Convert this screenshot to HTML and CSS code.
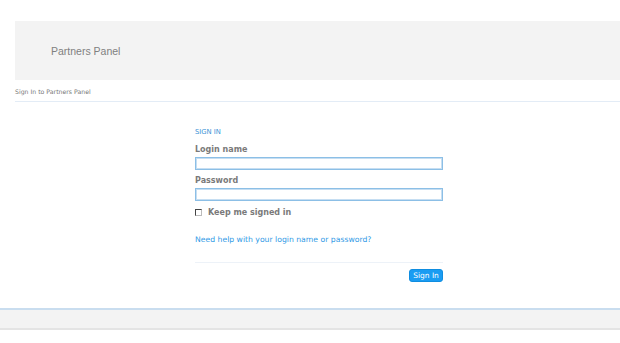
FILE: index.html
```html
<!DOCTYPE html>
<html>
<head>
<meta charset="utf-8">
<link rel="stylesheet" href="styles.css">
</head>
<body>
<div class="page">
  <header class="header">
    <div class="brand">Partners Panel</div>
  </header>
  <div class="crumbs">Sign In to Partners Panel</div>
  <main class="main">
    <form class="login">
      <div class="title">SIGN IN</div>
      <label class="lbl">Login name</label>
      <input class="field" type="text">
      <label class="lbl">Password</label>
      <input class="field" type="password">
      <label class="keep"><span class="box"></span>Keep me signed in</label>
      <a class="help" href="#">Need help with your login name or password?</a>
      <div class="actions">
        <button class="btn" type="button">Sign In</button>
      </div>
    </form>
  </main>
  <footer class="footer"></footer>
</div>
</body>
</html>
```
FILE: styles.css
```css
html, body { margin: 0; padding: 0; background: #fff; }
.page { width: 620px; padding-top: 21px; }
.header {
  margin-left: 15px;
  height: 59px;
  background: #f3f3f3;
  display: flex;
  align-items: center;
  padding-left: 36px;
}
.brand {
  font-family: "Liberation Sans", Arial, sans-serif;
  font-size: 10.5px;
  color: #808080;
}
.crumbs {
  margin-left: 15px;
  height: 22px;
  box-sizing: border-box;
  padding-top: 8px;
  border-bottom: 1px solid #e3ecf6;
  font-family: "DejaVu Sans", Verdana, sans-serif;
  font-size: 6.2px;
  color: #777;
}
.main { padding-top: 24px; height: 206px; box-sizing: border-box; }
.login {
  margin-left: 195px;
  width: 248px;
  display: flex;
  flex-direction: column;
  font-family: "DejaVu Sans", Verdana, sans-serif;
}
.title { font-size: 6.8px; color: #3a93d6; height: 13px; line-height: 13px; }
.lbl { font-size: 8px; font-weight: bold; color: #7a7a7a; line-height: 12px; height: 12px; margin-top: 5px; }
.field {
  margin: 1px 0 0 0;
  height: 13px;
  box-sizing: border-box;
  border: 1px solid #8cbfe6;
  box-shadow: inset 0 0 0 1px #c6def2;
  padding: 0;
  width: 248px;
  background: #fff;
}
.field + .lbl { margin-top: 5px; }
.keep {
  display: flex; align-items: center; gap: 6px;
  font-size: 8px; font-weight: bold; color: #7a7a7a;
  height: 12px; margin-top: 5px;
}
.box { width: 5px; height: 5px; border: 1px solid #444; border-right-color: #bbb; border-bottom-color: #bbb; display: inline-block; }
.help {
  font-size: 7.7px; color: #2f9ae6; text-decoration: none;
  margin-top: 16px; line-height: 12px; height: 12px;
}
.actions {
  margin-top: 16px;
  border-top: 1px solid #edf2f8;
  padding-top: 6px;
  display: flex; justify-content: flex-end;
}
.btn {
  font-family: "DejaVu Sans", Verdana, sans-serif;
  font-size: 7.5px; color: #fff;
  background: #1a9cf2;
  border: 1px solid #0f8de0;
  border-radius: 3px;
  height: 13px; width: 34px;
  padding: 0;
  line-height: 11px;
}
.footer {
  height: 18px;
  background: #f3f3f3;
  border-top: 2px solid #c9ddef;
  border-bottom: 2px solid #e4e4e4;
}
```
